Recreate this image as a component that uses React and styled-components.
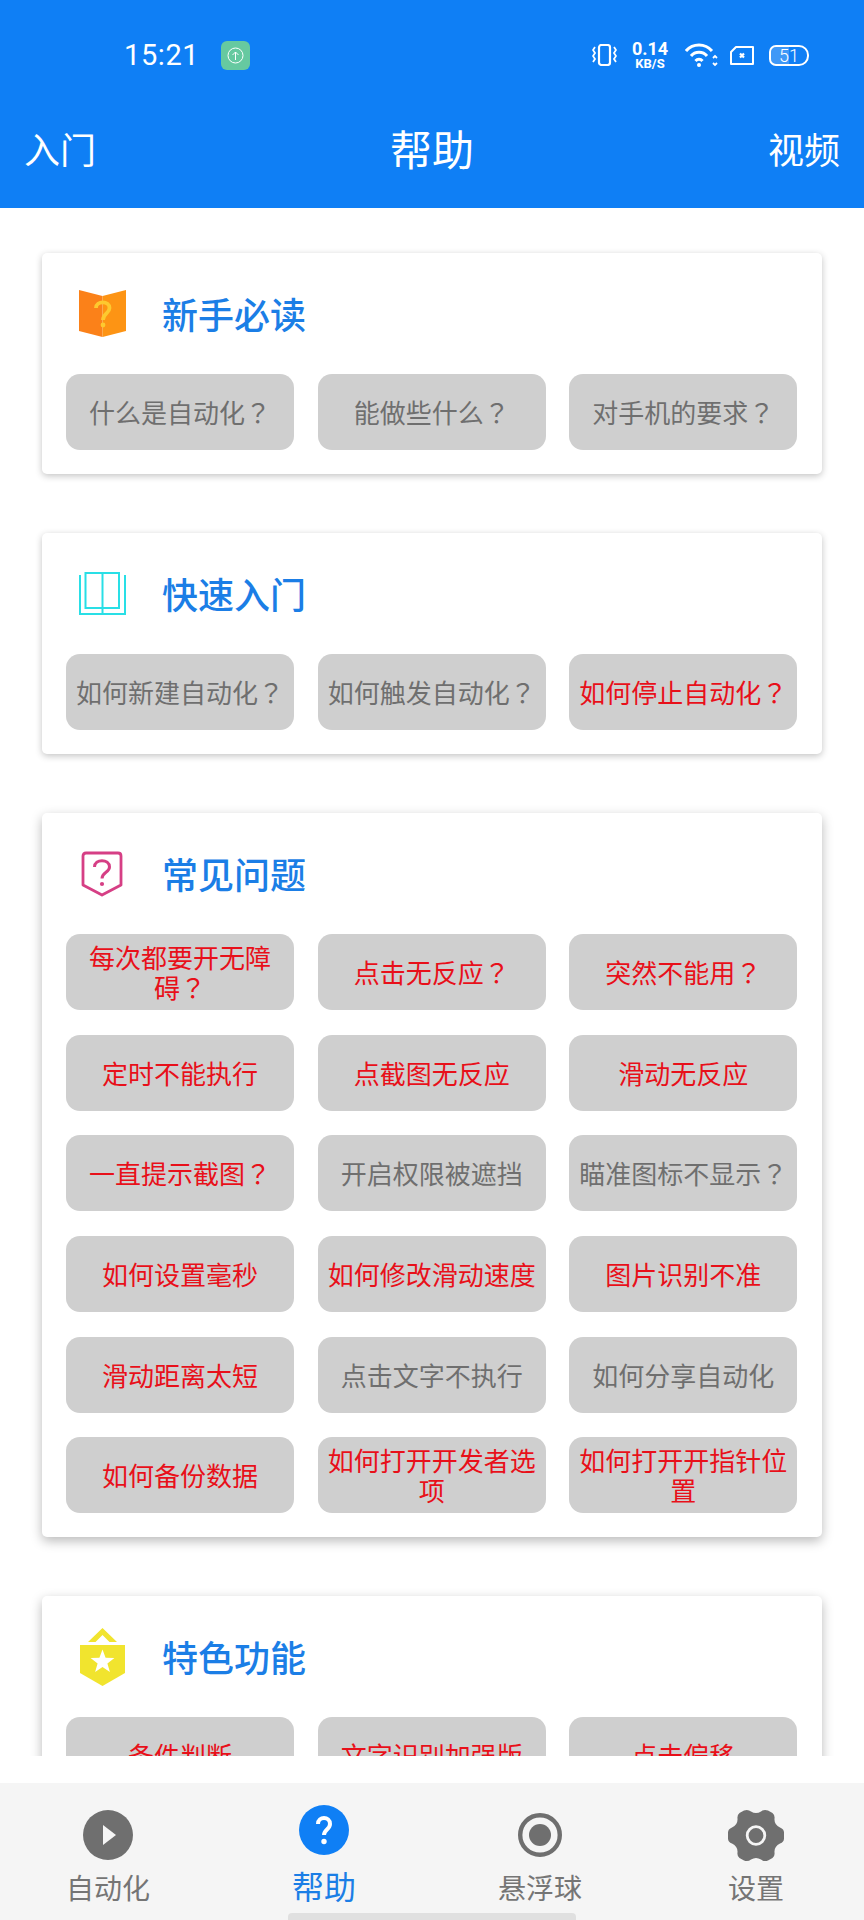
import React from 'react';
import styled, { createGlobalStyle } from 'styled-components';

const sections = [
  {
    title: '新手必读',
    icon: 'guide',
    items: [['什么是自动化？'], ['能做些什么？'], ['对手机的要求？']],
  },
  {
    title: '快速入门',
    icon: 'book',
    items: [['如何新建自动化？'], ['如何触发自动化？'], ['如何停止自动化？', true]],
  },
  {
    title: '常见问题',
    icon: 'question',
    lifted: true,
    items: [
      ['每次都要开无障碍？', true],
      ['点击无反应？', true],
      ['突然不能用？', true],
      ['定时不能执行', true],
      ['点截图无反应', true],
      ['滑动无反应', true],
      ['一直提示截图？', true],
      ['开启权限被遮挡'],
      ['瞄准图标不显示？'],
      ['如何设置毫秒', true],
      ['如何修改滑动速度', true],
      ['图片识别不准', true],
      ['滑动距离太短', true],
      ['点击文字不执行'],
      ['如何分享自动化'],
      ['如何备份数据', true],
      ['如何打开开发者选项', true],
      ['如何打开开指针位置', true],
    ],
  },
  {
    title: '特色功能',
    icon: 'star',
    lifted: true,
    items: [['条件判断', true], ['文字识别加强版', true], ['点击偏移', true]],
  },
];

const SectionIcon = ({ name }) => {
  if (name === 'guide') {
    return (
      <svg width="47" height="47" viewBox="0 0 47 47">
        <path d="M0 0 L23.5 6 V47 L0 41 Z" fill="#fb8119" />
        <path d="M47 0 L23.5 6 V47 L47 41 Z" fill="#fd9414" />
        <path d="M17 18 C17 10.5 30.5 10.5 30.5 18 C30.5 23.5 24 23.5 24 30" fill="none" stroke="#fdc92f" strokeWidth="3.8" />
        <circle cx="24" cy="35" r="2.4" fill="#fdc92f" />
      </svg>
    );
  }
  if (name === 'book') {
    return (
      <svg width="47" height="44" viewBox="0 0 47 44" fill="none" stroke="#29dfe6" strokeWidth="2">
        <path d="M1 3 V42 H46 V3" />
        <path d="M6.5 1 H40 V36 H6.5 Z" />
        <path d="M23.5 1 V42" />
      </svg>
    );
  }
  if (name === 'question') {
    return (
      <svg width="42" height="46" viewBox="0 0 42 46" fill="none">
        <path d="M5 2 H37 Q40 2 40 5 V34 L21 44 L2 34 V5 Q2 2 5 2 Z" stroke="#d63f85" strokeWidth="2.8" strokeLinejoin="round" />
        <path d="M13.5 16 C13.5 7.5 28.5 7.5 28.5 16 C28.5 21.5 21 21 21 27.5" stroke="#d63f85" strokeWidth="3" />
        <circle cx="21" cy="33" r="2.1" fill="#d63f85" />
      </svg>
    );
  }
  return (
    <svg width="45" height="58" viewBox="0 0 45 58">
      <path d="M22.5 0 L37 14 H29.5 L22.5 7 L15.5 14 H8 Z" fill="#f1e42e" />
      <path d="M0 17 H45 V45 L22.5 58 L0 45 Z" fill="#f1e42e" />
      <path d="M22.5 21.5 L25.6 29.7 L34.4 30 L27.4 35.4 L29.9 44 L22.5 39 L15.1 44 L17.6 35.4 L10.6 30 L19.4 29.7 Z" fill="#fff" />
    </svg>
  );
};

const PlayIcon = () => (
  <svg width="50" height="50" viewBox="0 0 50 50">
    <circle cx="25" cy="25" r="25" fill="#6f6f6f" />
    <path d="M20 15 L33 25 L20 35 Z" fill="#f5f5f5" />
  </svg>
);

const HelpIcon = () => (
  <svg width="50" height="50" viewBox="0 0 50 50">
    <circle cx="25" cy="25" r="25" fill="#0f7ff5" />
    <path d="M19 19 C19 11 31 11 31 19 C31 24.5 25 24.5 25 30" fill="none" stroke="#fff" strokeWidth="4" />
    <circle cx="25" cy="36.5" r="2.7" fill="#fff" />
  </svg>
);

const BallIcon = () => (
  <svg width="44" height="44" viewBox="0 0 44 44">
    <circle cx="22" cy="22" r="19.8" fill="none" stroke="#6f6f6f" strokeWidth="4.4" />
    <circle cx="22" cy="22" r="11" fill="#6f6f6f" />
  </svg>
);

const GearIcon = () => (
  <svg width="56" height="53" viewBox="0 0 56 53">
    <path
      d="M16 1.5 Q20 0 23 2.5 Q28 5.5 33 2.5 Q36 0 40 1.5 L44.5 4 Q47 6 46.5 9.5 Q46 15.5 52 18.5 Q56 20 56 23.5 V29.5 Q56 33 52 34.5 Q46 37.5 46.5 43.5 Q47 47 44.5 49 L40 51.5 Q36 53 33 50.5 Q28 47.5 23 50.5 Q20 53 16 51.5 L11.5 49 Q9 47 9.5 43.5 Q10 37.5 4 34.5 Q0 33 0 29.5 V23.5 Q0 20 4 18.5 Q10 15.5 9.5 9.5 Q9 6 11.5 4 Z"
      fill="#6f6f6f"
    />
    <circle cx="28" cy="26.5" r="8.8" fill="none" stroke="#f5f5f5" strokeWidth="2.8" />
  </svg>
);

const navItems = [
  { label: '自动化', Icon: PlayIcon },
  { label: '帮助', Icon: HelpIcon, active: true },
  { label: '悬浮球', Icon: BallIcon },
  { label: '设置', Icon: GearIcon },
];

// the full-width question mark sits centred in its box in the reference
const TopicText = ({ text }) =>
  text.endsWith('？') ? (
    <span>
      {text.slice(0, -1)}
      <QuestionMark>？</QuestionMark>
    </span>
  ) : (
    <span>{text}</span>
  );

const App = () => (
  <Page>
    <GlobalStyle />
    <Header>
      <StatusBar>
        <Time>15:21</Time>
        <UploadBadge>
          <svg width="17" height="17" viewBox="0 0 17 17" fill="none" stroke="#fff" strokeWidth="1">
            <circle cx="8.5" cy="8.5" r="7.5" />
            <path d="M8.5 13 V5 M5.5 8 L8.5 5 L11.5 8" />
          </svg>
        </UploadBadge>
        <StatusRight>
          <svg width="25" height="22" viewBox="0 0 25 22" fill="none" stroke="#fff">
            <rect x="7" y="1" width="11" height="20" rx="2.5" strokeWidth="2.2" />
            <path d="M3 3 L1 6 L3 9 L1 12 L3 15 L1 18 M22 3 L24 6 L22 9 L24 12 L22 15 L24 18" strokeWidth="1.8" />
          </svg>
          <Speed>
            <SpeedValue>0.14</SpeedValue>
            <SpeedUnit>KB/S</SpeedUnit>
          </Speed>
          <svg width="33" height="25" viewBox="0 0 33 25" fill="none" stroke="#fff" strokeWidth="3">
            <path d="M1 8 C8 0 20 0 27 8" />
            <path d="M6 13 C10 8 18 8 22 13" />
            <path d="M10.5 18 C12.5 15.5 15.5 15.5 17.5 18" />
            <circle cx="14" cy="22" r="2" fill="#fff" stroke="none" />
            <path d="M28 15 L30 13 L32 15 M28 20 L30 22 L32 20" strokeWidth="1.8" />
          </svg>
          <svg width="24" height="19" viewBox="0 0 24 19" fill="none">
            <path d="M6 1 H23 V18 H1 V6 Z" stroke="#fff" strokeWidth="2" strokeLinejoin="round" />
            <path d="M10 7.5 L14 11.5 M14 7.5 L10 11.5" stroke="#fff" strokeWidth="2.2" />
          </svg>
          <Battery>
            <BatteryLevel />
            <BatteryText>51</BatteryText>
          </Battery>
        </StatusRight>
      </StatusBar>
      <TitleBar>
        <SideAction>入门</SideAction>
        <PageTitle>帮助</PageTitle>
        <SideAction>视频</SideAction>
      </TitleBar>
    </Header>

    <Scroll>
      {sections.map((section) => (
        <Card key={section.title} $lifted={section.lifted}>
          <CardHead>
            <IconSlot>
              <SectionIcon name={section.icon} />
            </IconSlot>
            <CardTitle>{section.title}</CardTitle>
          </CardHead>
          <ButtonGrid>
            {section.items.map(([text, hot]) => (
              <TopicButton key={text} $hot={hot}>
                <TopicText text={text} />
              </TopicButton>
            ))}
          </ButtonGrid>
        </Card>
      ))}
    </Scroll>

    <BottomNav>
      {navItems.map(({ label, Icon, active }) => (
        <NavItem key={label}>
          <NavIcon $active={active}>
            <Icon />
          </NavIcon>
          <NavLabel $active={active}>{label}</NavLabel>
        </NavItem>
      ))}
      <HomeIndicator />
    </BottomNav>
  </Page>
);

export default App;

const GlobalStyle = createGlobalStyle`
  * {
    box-sizing: border-box;
  }

  body {
    margin: 0;
    background: #fff;
    font-family: "Noto Sans CJK SC", "Noto Sans", sans-serif;
    text-spacing-trim: space-all;
  }
`;

const Page = styled.div`
  display: flex;
  flex-direction: column;
  width: 864px;
  height: 1920px;
  overflow: hidden;
  background: #fff;
`;

const Header = styled.header`
  flex: none;
  height: 208px;
  background: #0f7ff5;
  color: #fff;
`;

const StatusBar = styled.div`
  display: flex;
  align-items: center;
  height: 110px;
  padding: 0 55px 0 124px;
`;

const Time = styled.span`
  font-family: Roboto, sans-serif;
  font-size: 29px;
  font-weight: 400;
  letter-spacing: 0.6px;
`;

const UploadBadge = styled.span`
  display: flex;
  align-items: center;
  justify-content: center;
  width: 29px;
  height: 29px;
  margin-left: 22px;
  border-radius: 6px;
  background: #66c9a0;
`;

const StatusRight = styled.div`
  display: flex;
  align-items: center;
  gap: 12px;
  margin-left: auto;
`;

const Speed = styled.div`
  display: flex;
  flex-direction: column;
  align-items: center;
  width: 40px;
  margin: 0 3px 0 1px;
  font-family: Roboto, sans-serif;
  font-weight: 700;
`;

const SpeedValue = styled.span`
  font-size: 18px;
  line-height: 16px;
`;

const SpeedUnit = styled.span`
  font-size: 13px;
  line-height: 13px;
`;

const Battery = styled.div`
  position: relative;
  width: 40px;
  height: 21px;
  margin-left: 3px;
  border: 2px solid #fff;
  border-radius: 7px 10px 10px 7px;
  overflow: hidden;
`;

const BatteryLevel = styled.div`
  width: 50%;
  height: 100%;
  background: rgba(255, 255, 255, 0.2);
`;

const BatteryText = styled.span`
  position: absolute;
  inset: 0;
  font-family: Roboto, sans-serif;
  font-size: 18px;
  line-height: 17px;
  font-weight: 300;
  text-align: center;
`;

const TitleBar = styled.div`
  display: flex;
  align-items: center;
  justify-content: space-between;
  height: 78px;
  padding: 0 24px 2px;
`;

const SideAction = styled.span`
  font-size: 36px;
  line-height: 76px;
`;

const PageTitle = styled.h1`
  margin: 0;
  font-size: 42px;
  font-weight: 400;
  line-height: 76px;
`;

const Scroll = styled.main`
  flex: none;
  display: flex;
  flex-direction: column;
  gap: 59px;
  height: 1548px;
  padding: 45px 42px 0;
  overflow: hidden;
`;

const Card = styled.section`
  flex: none;
  padding: 0 25px 24px 24px;
  border-radius: 5px;
  background: #fff;
  box-shadow: ${(p) =>
    p.$lifted
      ? '0 4px 12px rgba(0, 0, 0, 0.28)'
      : '0 2px 7px rgba(0, 0, 0, 0.24)'};
`;

const CardHead = styled.div`
  display: flex;
  align-items: center;
  height: 121px;
`;

const IconSlot = styled.div`
  display: flex;
  align-items: center;
  justify-content: center;
  width: 72px;
  margin-right: 24px;
`;

const CardTitle = styled.h2`
  margin: 0 0 2px;
  color: #1b7ee6;
  font-size: 36px;
  font-weight: 500;
`;

const ButtonGrid = styled.div`
  display: grid;
  grid-template-columns: repeat(3, 228px);
  grid-auto-rows: 76px;
  column-gap: 23.7px;
  row-gap: 24.7px;
`;

const TopicButton = styled.div`
  display: flex;
  align-items: center;
  justify-content: center;
  padding: 0 6px;
  border-radius: 14px;
  background: #cfcfcf;
  color: ${(p) => (p.$hot ? '#e8101a' : '#6f6f6f')};
  font-size: 26px;
  line-height: 30px;
  text-align: center;
`;

const QuestionMark = styled.span`
  font-family: "Noto Sans CJK TC", sans-serif;
`;

const BottomNav = styled.nav`
  position: relative;
  flex: none;
  display: grid;
  grid-template-columns: repeat(4, 216px);
  height: 137px;
  margin-top: 27px;
  padding-top: 22px;
  background: #f5f5f5;
`;

const NavItem = styled.div`
  display: flex;
  flex-direction: column;
  align-items: center;
`;

const NavIcon = styled.div`
  display: flex;
  align-items: center;
  justify-content: center;
  height: ${(p) => (p.$active ? '50px' : '60px')};
  margin-bottom: ${(p) => (p.$active ? '8px' : '0')};
`;

const NavLabel = styled.span`
  color: ${(p) => (p.$active ? '#1b7ee6' : '#757575')};
  font-size: ${(p) => (p.$active ? '32px' : '28px')};
  line-height: 44px;
`;

const HomeIndicator = styled.div`
  position: absolute;
  left: 288px;
  bottom: 0;
  width: 288px;
  height: 7px;
  border-radius: 4px 4px 0 0;
  background: #e0e0e0;
`;
